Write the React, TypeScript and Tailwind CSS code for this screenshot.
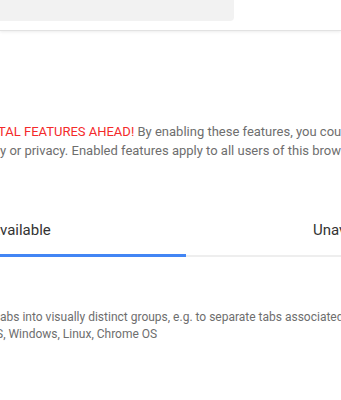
import React from 'react';

// Text that runs off the left edge: the prefix sits in a zero-width box and overflows leftwards.
const Clipped: React.FC<{ hidden: string; shift?: string; children: React.ReactNode }> = ({ hidden, shift = '', children }) => (
  <div className={`flex whitespace-nowrap ${shift}`}>
    <span className="flex w-0 shrink-0 justify-end">
      <span>{hidden}</span>
    </span>
    <span>{children}</span>
  </div>
);

export default function App() {
  return (
    <div className="h-[400px] w-[341px] overflow-hidden bg-white font-['Roboto',_'Noto_Sans',_sans-serif]">
      {/* Header with search field */}
      <header className="h-[31px] border-b border-[#e2e2e2] shadow-[0_1px_3px_rgba(0,0,0,0.08)]">
        <div className="h-[21px] w-[234px] rounded-br-[4px] bg-[#f2f2f2]" />
      </header>

      {/* Warning */}
      <section className="mt-[91px] text-[13px] leading-[19px] text-[#6e6e6e]">
        <Clipped hidden="WARNING: EXPERIMEN" shift="-ml-[2px]">
          <span className="text-[#f42a2a]">TAL FEATURES AHEAD!</span> By enabling these features, you could lose browser data or compromise your
        </Clipped>
        <Clipped hidden="securit">
          y or privacy. Enabled features apply to all users of this browser.
        </Clipped>
      </section>

      {/* Tabs */}
      <nav className="mt-[58px] flex items-end">
        <div className="w-[186px] shrink-0 border-b-[3px] border-[#4285f4] pb-[12px] text-[15px] leading-[24px] text-[#333333]">
          <Clipped hidden="A">vailable</Clipped>
        </div>
        <div className="flex-1 whitespace-nowrap border-b-2 border-[#eeeeee] pb-[13px] pl-[127px] text-[15px] leading-[24px] text-[#333333]">
          Unavailable
        </div>
      </nav>

      {/* Flag description */}
      <section className="mt-[52px] text-[12px] leading-[17px] text-[#6e6e6e]">
        <Clipped hidden="Allows users to organize t">
          abs into visually distinct groups, e.g. to separate tabs associated with different tasks.
        </Clipped>
        <Clipped hidden="macO" shift="-ml-[4px]">
          S, Windows, Linux, Chrome OS
        </Clipped>
      </section>
    </div>
  );
}
